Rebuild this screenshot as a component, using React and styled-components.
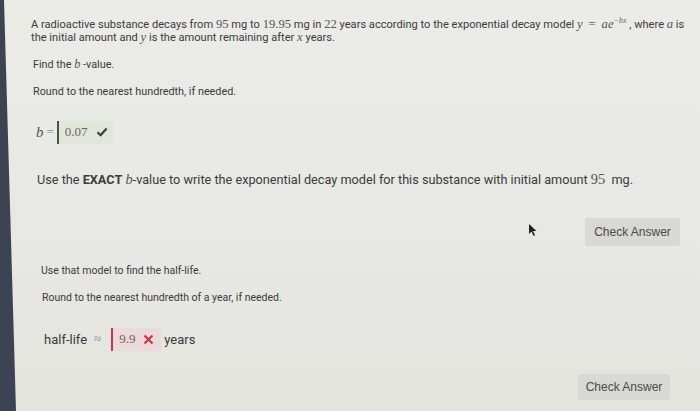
import React from 'react';
import styled, { createGlobalStyle } from 'styled-components';

const GlobalStyle = createGlobalStyle`
  html, body {
    margin: 0;
    padding: 0;
    background: #e9e9e5;
  }
  body {
    font-family: Roboto, "Liberation Sans", Arial, sans-serif;
    color: #3a3a3a;
  }
`;

const Page = styled.div`
  position: relative;
  display: flex;
  width: 700px;
  height: 411px;
  overflow: hidden;
  background: linear-gradient(180deg, #ebebe8 0%, #e7e7e3 60%, #e4e4df 100%);
`;

const Bezel = styled.div`
  flex: none;
  width: 16px;
  background: #3c4352;
  clip-path: polygon(0 0, 4px 0, 16px 100%, 0 100%);
`;

const Content = styled.main`
  flex: 1;
  display: flex;
  flex-direction: column;
  padding: 14px 0 0 15px;
`;

const Text = styled.p`
  margin: 0;
  margin-left: ${(p) => p.$indent || 0}px;
  font-size: ${(p) => p.$size || 11}px;
  line-height: ${(p) => p.$lh || 14}px;
  margin-top: ${(p) => p.$top || 0}px;
  color: #3b3b3b;
`;

const M = styled.span`
  font-family: "Liberation Serif", "Times New Roman", serif;
  font-style: ${(p) => (p.$up ? 'normal' : 'italic')};
  font-size: 1.14em;
  color: #555;
`;

const Sup = styled.sup`
  font-family: "Liberation Serif", serif;
  font-style: italic;
  font-size: 0.72em;
  color: #666;
`;

const Op = styled.span`
  font-family: "Liberation Serif", "Times New Roman", serif;
  color: #8a8a8a;
  margin: ${(p) => p.$m};
`;

const AnswerRow = styled.div`
  display: flex;
  align-items: center;
  margin-left: ${(p) => p.$indent || 0}px;
  margin-top: ${(p) => p.$top || 0}px;
  font-size: 13px;
  color: #3b3b3b;
`;

const Answer = styled.div`
  display: flex;
  align-items: center;
  gap: 8px;
  height: 23px;
  width: ${(p) => p.$w}px;
  box-sizing: border-box;
  padding-left: 6px;
  border-left: 2px solid ${(p) => (p.$ok ? '#3f5c3a' : '#c8364a')};
  background: ${(p) => (p.$ok ? '#e1e6da' : '#ecd9da')};
  font-family: "Liberation Serif", "Times New Roman", serif;
  font-size: 13px;
  color: #666;
`;

const Mark = styled.span`
  display: inline-flex;
  align-items: center;
`;

const Unit = styled.span`
  margin-left: 3px;
`;

const ButtonRow = styled.div`
  display: flex;
  justify-content: flex-end;
  align-items: center;
  padding-right: ${(p) => p.$right}px;
  margin-top: ${(p) => p.$top}px;
`;

const CheckButton = styled.button`
  font-family: "Liberation Sans", Arial, sans-serif;
  font-size: 12px;
  color: #4a4a4a;
  background: #d8d8d4;
  border: none;
  border-radius: 2px;
  width: ${(p) => p.$w}px;
  height: ${(p) => p.$h}px;
  padding: 0;
`;

const Cursor = styled.svg`
  position: absolute;
  left: 528px;
  top: 223px;
`;

export default function App() {
  return (
    <>
      <GlobalStyle />
      <Page>
        <Bezel />
        <Content>
          <Text $size={11.1} $lh={13}>
            A radioactive substance decays from <M $up>95</M> mg to <M $up>19.95</M> mg in{' '}
            <M $up>22</M> years according to the exponential decay model <M>y</M>{' '}
            <M $up>&nbsp;=&nbsp;</M> <M>ae</M>
            <Sup>−bx</Sup> , where <M>a</M> is
            <br />
            the initial amount and <M>y</M> is the amount remaining after <M>x</M> years.
          </Text>
          <Text $indent={2} $top={13} $size={10.8}>
            Find the <M>b</M> -value.
          </Text>
          <Text $indent={2} $top={13} $size={10.8}>
            Round to the nearest hundredth, if needed.
          </Text>
          <AnswerRow $indent={5} $top={22}>
            <M>b</M>
            <Op $m="0 3px 0 3px">=</Op>
            <Answer $ok $w={56}>
              0.07
              <Mark>
                <svg width="12" height="10" viewBox="0 0 12 10">
                  <path d="M1.5 5.2 L4.6 8.2 L10.6 1.6" fill="none" stroke="#3d3d3d" strokeWidth="2.2" />
                </svg>
              </Mark>
            </Answer>
          </AnswerRow>
          <Text $indent={6} $top={27} $size={12.7} $lh={16}>
            Use the <b>EXACT</b> <M>b</M>-value to write the exponential decay model for this substance
            with initial amount <M $up>95</M>&nbsp; mg.
          </Text>
          <ButtonRow $right={20} $top={30}>
            <CheckButton $w={95} $h={28}>Check Answer</CheckButton>
          </ButtonRow>
          <Text $indent={10} $top={18} $size={10.5}>
            Use that model to find the half-life.
          </Text>
          <Text $indent={11} $top={13} $size={10.5}>
            Round to the nearest hundredth of a year, if needed.
          </Text>
          <AnswerRow $indent={13} $top={23}>
            half-life
            <Op $m="0 10px 0 7px">≈</Op>
            <Answer $w={50}>
              9.9
              <Mark>
                <svg width="11" height="11" viewBox="0 0 11 11">
                  <path d="M1.5 1.5 L9.5 9.5 M9.5 1.5 L1.5 9.5" stroke="#c8364a" strokeWidth="2.2" />
                </svg>
              </Mark>
            </Answer>
            <Unit>years</Unit>
          </AnswerRow>
          <ButtonRow $right={30} $top={23}>
            <CheckButton $w={92} $h={26}>Check Answer</CheckButton>
          </ButtonRow>
        </Content>
        <Cursor width="10" height="14" viewBox="0 0 10 14">
          <path d="M1 1 L1 11 L3.5 8.5 L5.5 13 L7 12.3 L5 8 L8.5 8 Z" fill="#222" />
        </Cursor>
      </Page>
    </>
  );
}
